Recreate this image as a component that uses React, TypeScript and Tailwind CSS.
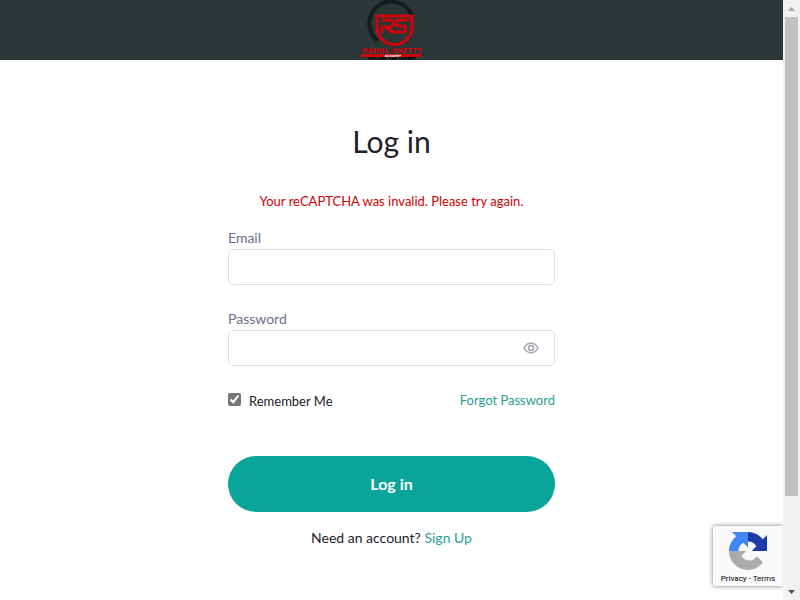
import React, { useState } from "react";

function AcademyLogo() {
  return (
    <svg width="62" height="60" viewBox="0 0 62 60" role="img" aria-label="Rahul Shetty Academy">
      <path d="M51 16A22 22 0 1 0 17 41" fill="none" stroke="#161b1b" strokeWidth="4" />
      <path d="M16 22V16H51V27A17 17 0 0 1 16 27V22" fill="none" stroke="#d0020c" strokeWidth="3" />
      <path d="M21 33V27H29Q32 27 32 24Q32 20 29 20H21M25 27L32 33" fill="none" stroke="#d0020c" strokeWidth="3" />
      <path d="M48 20H39Q35 20 35 23Q35 26 39 26H41Q45 26 45 29Q45 32 41 32H31" fill="none" stroke="#d0020c" strokeWidth="3" />
      <text x="31" y="53" textAnchor="middle" fontFamily="DejaVu Sans, sans-serif" fontWeight="700" fontSize="7" fill="#d0020c">RAHUL SHETTY</text>
      <rect x="0" y="54" width="61" height="3" fill="#d0020c" />
      <text x="32" y="57" textAnchor="middle" fontFamily="DejaVu Sans, sans-serif" fontWeight="700" fontSize="3" fill="#ffffff">ACADEMY</text>
      <text x="31" y="60" textAnchor="middle" fontFamily="DejaVu Sans, sans-serif" fontWeight="700" fontSize="4" fill="#000000">BECOME THE EXPERT</text>
    </svg>
  );
}

function RecaptchaLogo() {
  return (
    <svg width="38" height="38" viewBox="0 0 64 64" aria-hidden="true">
      <path fill="#1c3aa9" d="M64 32V5L57 12C51 5 42 0 32 0V16C39 16 43 19 46 24L38 32Z" />
      <path fill="#4285f4" d="M32 0H5L12 7C5 13 0 22 0 32H16C16 25 19 21 24 18L32 26Z" />
      <path fill="#ababab" d="M0 32C0 50 14 64 32 64C42 64 51 59 57 51L47 41C43 46 39 48 35 48C28 48 24 45 21 40L29 32Z" />
    </svg>
  );
}

function Scrollbar() {
  return (
    <div aria-hidden="true" className="flex w-[17px] shrink-0 flex-col items-center bg-[#f1f1f1]">
      <div className="flex h-[17px] items-center">
        <svg width="7" height="4"><path d="M0 4L3.5 0L7 4Z" fill="#a3a3a3" /></svg>
      </div>
      <div className="w-[13px] grow-11 bg-[#c1c1c1]" />
      <div className="grow-2" />
      <div className="flex h-[17px] items-center">
        <svg width="7" height="4"><path d="M0 0H7L3.5 4Z" fill="#505050" /></svg>
      </div>
    </div>
  );
}

const field = "block h-9 w-full rounded-[5px] border border-[#dedfe6] bg-white px-3 text-sm outline-none focus:border-[#09a59a]";
const fieldLabel = "block pb-[2px] text-sm leading-[18px] text-[#696f8c]";

export default function App() {
  const [visible, setVisible] = useState(false);
  return (
    <div className="flex h-screen bg-white font-['Lato',sans-serif] text-[#1d2129]">
      <div className="relative min-w-0 flex-1 overflow-hidden">
        <header className="flex h-[60px] justify-center bg-[#2b3636]">
          <a href="#home"><AcademyLogo /></a>
        </header>
        <main className="mx-auto w-full max-w-[327px] pt-[63px]">
          <h1 className="text-center text-[30px] leading-9">Log in</h1>
          <p role="alert" className="mt-8 text-center text-[13px] leading-5 text-[#cc0000]">Your reCAPTCHA was invalid. Please try again.</p>
          <form onSubmit={(e) => e.preventDefault()} className="pt-[18px]">
            <label htmlFor="email" className={fieldLabel}>Email</label>
            <input id="email" type="email" className={field} />
            <label htmlFor="password" className={fieldLabel + " mt-[25px]"}>Password</label>
            <div className="relative">
              <input id="password" type={visible ? "text" : "password"} className={field} />
              <button type="button" aria-label="Show password" onClick={() => setVisible(!visible)} className="absolute inset-y-0 right-4 flex items-center">
                <svg width="16" height="12" viewBox="0 0 16 12" fill="none" stroke="#a5a6ae" strokeWidth="1.5">
                  <path d="M1 6C2.5 2.8 5 1.3 8 1.3S13.5 2.8 15 6C13.5 9.2 11 10.7 8 10.7S2.5 9.2 1 6Z" />
                  <circle cx="8" cy="6" r="2.5" />
                </svg>
              </button>
            </div>
            <div className="mt-6 flex items-start justify-between text-[13px] leading-5">
              <label className="flex items-start pt-px">
                <input type="checkbox" defaultChecked className="mt-[2px] mr-2 size-[13px] accent-[#767676]" />
                Remember Me
              </label>
              <a href="#forgot" className="text-[#2a9d93]">Forgot Password</a>
            </div>
            <button type="submit" className="mt-[45px] h-14 w-full rounded-full bg-[#0aa59a] text-base font-bold text-white">Log in</button>
          </form>
          <p className="mt-4 text-center text-sm leading-5">Need an account? <a href="#signup" className="text-[#2a9d93]">Sign Up</a></p>
        </main>
        <aside className="absolute right-0 bottom-[14px] flex h-[60px] w-[70px] flex-col items-center rounded-l-xs bg-[#f9f9f9] pt-[6px] font-['Roboto',sans-serif] text-[8px] leading-[10px] text-black shadow-[0_0_5px_gray]">
          <RecaptchaLogo />
          <p className="mt-1"><a href="#privacy">Privacy</a><span> - </span><a href="#terms">Terms</a></p>
        </aside>
      </div>
      <Scrollbar />
    </div>
  );
}
